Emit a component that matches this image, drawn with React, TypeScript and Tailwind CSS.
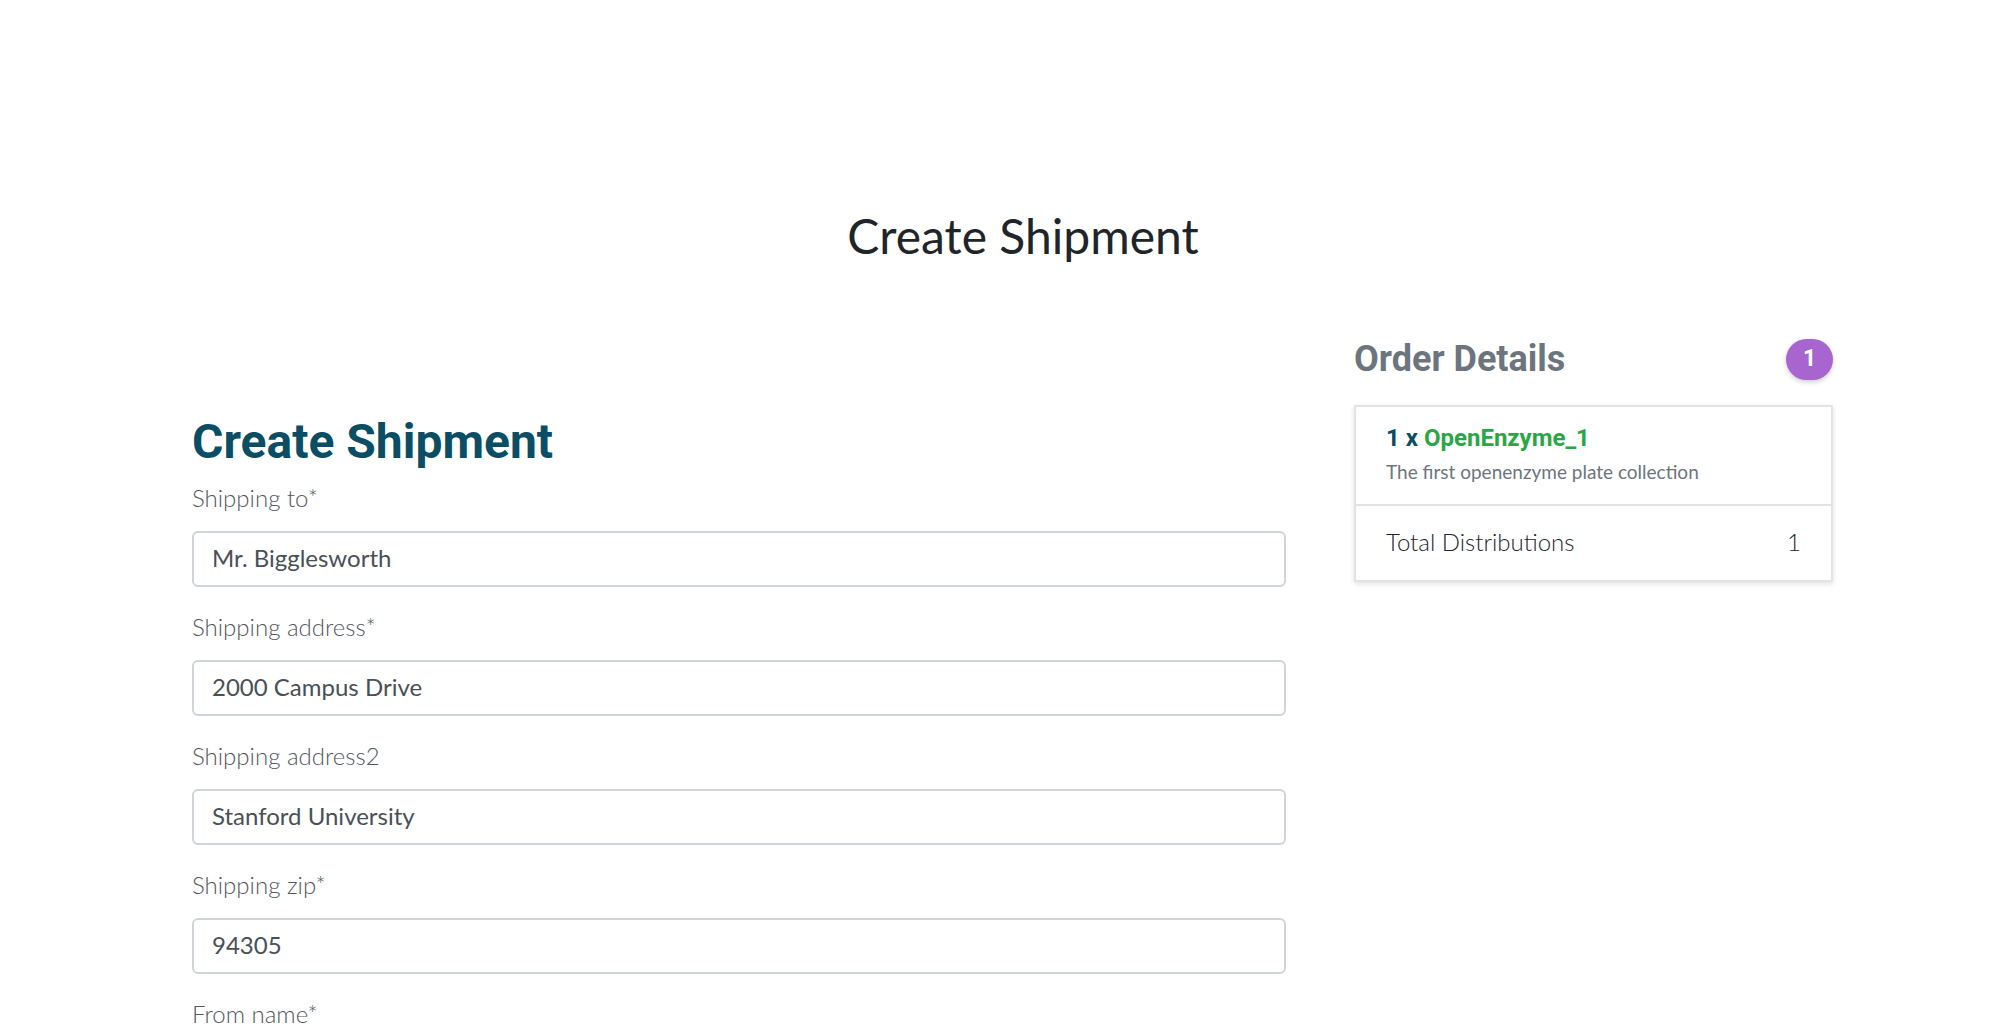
import React from "react";

// Campos do formulário de envio
const fields = [
  { label: "Shipping to", required: true, value: "Mr. Bigglesworth" },
  { label: "Shipping address", required: true, value: "2000 Campus Drive" },
  { label: "Shipping address2", required: false, value: "Stanford University" },
  { label: "Shipping zip", required: true, value: "94305" },
  { label: "From name", required: true, value: "" },
];

const lato = "font-['Lato',sans-serif]";
const roboto = "font-['Roboto',sans-serif]";

export default function App() {
  return (
    <div className={`min-h-screen bg-white ${lato} text-[#212529] overflow-hidden h-[1026px]`}>
      {/* Título da página */}
      <div className="pt-[207px] flex justify-center pl-[44px]">
        <h1 className="text-[48px] leading-[58px] font-normal text-[#212529]">Create Shipment</h1>
      </div>

      <div className="flex mt-[74px] pl-[192px]">
        {/* Formulário */}
        <div className="w-[1094px] pt-[74px]">
          <h2 className={`${roboto} text-[48px] leading-[58px] font-bold text-[#0b4d64] mb-[9px]`}>
            Create Shipment
          </h2>
          {fields.map((f) => (
            <div key={f.label} className="mb-[22px]">
              <label className="block text-[24px] leading-[36px] font-light text-[#52585e] mb-[15px]">
                {f.label}
                {f.required && <span>*</span>}
              </label>
              <input
                readOnly
                value={f.value}
                className="w-full h-[56px] px-[18px] pb-[3px] border-2 border-[#cfd4da] rounded-[6px] text-[24px] text-[#495057] bg-white outline-none"
              />
            </div>
          ))}
        </div>

        {/* Detalhes do pedido */}
        <div className="ml-[68px] w-[479px]">
          <div className="flex items-center justify-between">
            <h3 className={`${roboto} text-[36px] leading-[41px] font-bold text-[#6c757d]`}>Order Details</h3>
            <span
              className={`${roboto} h-[41px] w-[47px] rounded-full bg-[#a865cf] text-white text-[23px] font-bold flex items-center justify-center shadow-[0_2px_5px_rgba(0,0,0,0.2)]`}
            >
              1
            </span>
          </div>

          <div className="mt-[25px] border-2 border-[#e3e3e3] shadow-[0_2px_5px_rgba(0,0,0,0.12)] bg-white">
            <div className="px-[30px] pt-[17px] pb-[19px]">
              <div className={`${roboto} text-[24px] leading-[1.2] font-bold`}>
                <span className="text-[#0b4d64]">1 x </span>
                <span className="text-[#28a745]">OpenEnzyme_1</span>
              </div>
              <div className="text-[19px] leading-[27px] text-[#6c757d] mt-[5px]">
                The first openenzyme plate collection
              </div>
            </div>
            <div className="border-t-2 border-[#e3e3e3] px-[30px] pt-[18px] pb-[20px] flex justify-between text-[24px] leading-[36px] font-light text-[#212529]">
              <span>Total Distributions</span>
              <span>1</span>
            </div>
          </div>
        </div>
      </div>
    </div>
  );
}
